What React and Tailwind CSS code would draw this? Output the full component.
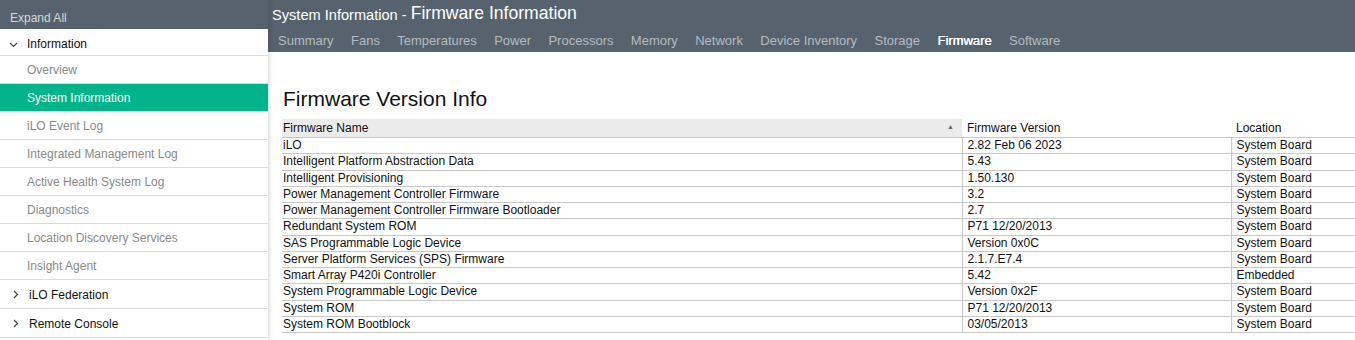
import React from "react";

const subItems = [
  "Overview",
  "System Information",
  "iLO Event Log",
  "Integrated Management Log",
  "Active Health System Log",
  "Diagnostics",
  "Location Discovery Services",
  "Insight Agent",
];

const tabs = [
  "Summary",
  "Fans",
  "Temperatures",
  "Power",
  "Processors",
  "Memory",
  "Network",
  "Device Inventory",
  "Storage",
  "Firmware",
  "Software",
];

const rows = [
  ["iLO", "2.82 Feb 06 2023", "System Board"],
  ["Intelligent Platform Abstraction Data", "5.43", "System Board"],
  ["Intelligent Provisioning", "1.50.130", "System Board"],
  ["Power Management Controller Firmware", "3.2", "System Board"],
  ["Power Management Controller Firmware Bootloader", "2.7", "System Board"],
  ["Redundant System ROM", "P71 12/20/2013", "System Board"],
  ["SAS Programmable Logic Device", "Version 0x0C", "System Board"],
  ["Server Platform Services (SPS) Firmware", "2.1.7.E7.4", "System Board"],
  ["Smart Array P420i Controller", "5.42", "Embedded"],
  ["System Programmable Logic Device", "Version 0x2F", "System Board"],
  ["System ROM", "P71 12/20/2013", "System Board"],
  ["System ROM Bootblock", "03/05/2013", "System Board"],
];

function ChevronDown() {
  return (
    <svg width="9" height="6" viewBox="0 0 9 6" className="mr-[9px] mt-[2px]">
      <polyline points="1,1 4.5,4.5 8,1" fill="none" stroke="#444" strokeWidth="1.2" />
    </svg>
  );
}

function ChevronRight() {
  return (
    <svg width="6" height="9" viewBox="0 0 6 9" className="ml-[2px] mr-[10px]">
      <polyline points="1,1 4.5,4.5 1,8" fill="none" stroke="#444" strokeWidth="1.2" />
    </svg>
  );
}

export default function App() {
  return (
    <div
      className="flex w-[1355px] h-[340px] overflow-hidden bg-white text-[12px]"
      style={{ fontFamily: '"Liberation Sans", Arial, sans-serif' }}
    >
      {/* Sidebar */}
      <div className="relative z-10 w-[268px] shrink-0 bg-white shadow-[2px_0_4px_rgba(0,0,0,0.12)] flex flex-col">
        <div className="h-[29px] bg-[#56636e] text-[#d3d8dc] flex items-center pl-[10px] pt-[7px] text-[12px]">
          Expand All
        </div>
        <div className="h-[27px] border-b border-[#dcdcdc] flex items-center pl-[9px] pt-[3px] text-[#111]">
          <ChevronDown />
          Information
        </div>
        {subItems.map((item) => (
          <div
            key={item}
            className={
              item === "System Information"
                ? "h-[28px] border-b border-[#dcdcdc] flex items-center pl-[27px] bg-[#01b48a] text-white"
                : "h-[28px] border-b border-[#dcdcdc] flex items-center pl-[27px] text-[#8a8a8a]"
            }
          >
            {item}
          </div>
        ))}
        <div className="h-[29px] border-b border-[#dcdcdc] flex items-center pl-[11px] pt-[1px] text-[#111]">
          <ChevronRight />
          iLO Federation
        </div>
        <div className="h-[29px] border-b border-[#dcdcdc] flex items-center pl-[11px] pt-[1px] text-[#111]">
          <ChevronRight />
          Remote Console
        </div>
      </div>

      {/* Main */}
      <div className="flex-1 flex flex-col min-w-0">
        <div className="h-[52px] bg-[#56636e] flex flex-col shrink-0">
          <div className="h-[30px] flex items-end pl-[4px] pb-[7px] text-white">
            <span className="text-[14.6px] leading-none">System Information -&nbsp;</span>
            <span className="text-[17.6px] leading-none">Firmware Information</span>
          </div>
          <div className="flex items-center h-[22px] pl-[10px] gap-[17.4px] text-[13px]">
            {tabs.map((t) => (
              <span
                key={t}
                className={t === "Firmware" ? "text-white [text-shadow:0.3px_0_0_#fff]" : "text-[#b3bbc1]"}
              >
                {t}
              </span>
            ))}
          </div>
        </div>

        <div className="pl-[14px] pt-[35px]">
          <h1 className="text-[21px] leading-[24px] text-[#111] pl-[1px]">Firmware Version Info</h1>
          <table className="mt-[8px] w-[1090px] border-collapse table-fixed text-[12px] text-[#111]">
            <colgroup>
              <col className="w-[680px]" />
              <col className="w-[269px]" />
              <col />
            </colgroup>
            <thead>
              <tr className="h-[17px]">
                <th className="bg-[#ebebeb] font-normal text-left pl-[1px] border-b border-[#c9c9c9] relative">
                  Firmware Name
                  <span className="absolute right-[8px] top-[3px] text-[7px] text-[#666]">▲</span>
                </th>
                <th className="font-normal text-left pl-[5px] border-b border-[#c9c9c9]">Firmware Version</th>
                <th className="font-normal text-left pl-[5px] border-b border-[#c9c9c9]">Location</th>
              </tr>
            </thead>
            <tbody>
              {rows.map((r) => (
                <tr key={r[0]} className="h-[16.25px] leading-[15px]">
                  <td className="pl-[1px] border-b border-[#c9c9c9] whitespace-nowrap">{r[0]}</td>
                  <td className="pl-[5px] border-b border-l border-[#c9c9c9] whitespace-nowrap">{r[1]}</td>
                  <td className="pl-[5px] border-b border-l border-[#c9c9c9] whitespace-nowrap">{r[2]}</td>
                </tr>
              ))}
            </tbody>
          </table>
        </div>
      </div>
    </div>
  );
}
